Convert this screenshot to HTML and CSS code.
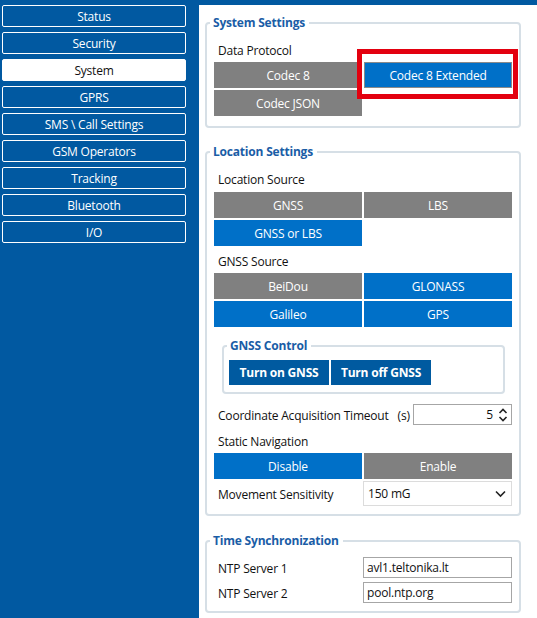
FILE: index.html
```html
<!DOCTYPE html>
<html>
<head>
<meta charset="utf-8">
<link rel="stylesheet" href="styles.css">
</head>
<body>
<div class="app">
  <nav class="nav">
    <div class="nav-btn">Status</div>
    <div class="nav-btn">Security</div>
    <div class="nav-btn active">System</div>
    <div class="nav-btn">GPRS</div>
    <div class="nav-btn">SMS \ Call Settings</div>
    <div class="nav-btn">GSM Operators</div>
    <div class="nav-btn">Tracking</div>
    <div class="nav-btn">Bluetooth</div>
    <div class="nav-btn">I/O</div>
  </nav>
  <main class="main">
    <fieldset class="group g-system">
      <legend>System Settings</legend>
      <div class="label l-proto">Data Protocol</div>
      <div class="opts">
        <div class="opt gray">Codec 8</div>
        <div class="opt blue framed highlight">Codec 8 Extended</div>
        <div class="opt gray">Codec JSON</div>
      </div>
    </fieldset>

    <fieldset class="group g-loc">
      <legend>Location Settings</legend>
      <div class="label l-src">Location Source</div>
      <div class="opts">
        <div class="opt gray">GNSS</div>
        <div class="opt gray">LBS</div>
        <div class="opt blue">GNSS or LBS</div>
      </div>
      <div class="label l-gnss">GNSS Source</div>
      <div class="opts">
        <div class="opt gray">BeiDou</div>
        <div class="opt blue">GLONASS</div>
        <div class="opt blue">Galileo</div>
        <div class="opt blue">GPS</div>
      </div>
      <fieldset class="group inner">
        <legend>GNSS Control</legend>
        <div class="ctrl-row">
          <div class="ctrl">Turn on GNSS</div>
          <div class="ctrl">Turn off GNSS</div>
        </div>
      </fieldset>
      <div class="row r-timeout">
        <span class="row-label">Coordinate Acquisition Timeout</span>
        <span class="unit">(s)</span>
        <div class="spin">
          <span class="spin-val">5</span>
          <svg class="spin-arrows" width="10" height="16" viewBox="0 0 10 16">
            <path d="M1.5 6 L5 2.5 L8.5 6" fill="none" stroke="#222" stroke-width="1.6"/>
            <path d="M1.5 10 L5 13.5 L8.5 10" fill="none" stroke="#222" stroke-width="1.6"/>
          </svg>
        </div>
      </div>
      <div class="label l-static">Static Navigation</div>
      <div class="opts">
        <div class="opt blue">Disable</div>
        <div class="opt gray">Enable</div>
      </div>
      <div class="row r-move">
        <span class="row-label">Movement Sensitivity</span>
        <div class="select">
          <span>150 mG</span>
          <svg width="11" height="8" viewBox="0 0 11 8">
            <path d="M1 1.5 L5.5 6 L10 1.5" fill="none" stroke="#222" stroke-width="1.6"/>
          </svg>
        </div>
      </div>
    </fieldset>

    <fieldset class="group g-time">
      <legend>Time Synchronization</legend>
      <div class="row r-ntp">
        <span class="row-label">NTP Server 1</span>
        <div class="text-in">avl1.teltonika.lt</div>
      </div>
      <div class="row r-ntp">
        <span class="row-label">NTP Server 2</span>
        <div class="text-in">pool.ntp.org</div>
      </div>
    </fieldset>
  </main>
</div>
</body>
</html>
```

FILE: styles.css
```css
* { box-sizing: border-box; }
html, body {
  margin: 0;
  padding: 0;
  width: 537px;
  height: 618px;
  overflow: hidden;
  background: #0159a1;
  font-family: "Open Sans", "Noto Sans", sans-serif;
  font-size: 12px;
  color: #111;
}
.app {
  display: flex;
  height: 618px;
}
.nav {
  width: 199px;
  flex: none;
  padding: 5px 0 0 2px;
  display: flex;
  flex-direction: column;
  gap: 5px;
}
.nav-btn {
  width: 184px;
  height: 22px;
  border: 1px solid #ffffff;
  border-radius: 2px;
  color: #fff;
  display: flex;
  align-items: center;
  justify-content: center;
  letter-spacing: -0.2px;
}
.nav-btn.active {
  background: #fff;
  color: #111;
}
.main {
  flex: 1;
  margin-top: 5px;
  background: #fff;
  padding: 10px 16px 0 6px;
}
.group {
  margin: 0;
  border: 2px solid #d6dfe6;
  border-radius: 4px;
  padding: 0 7px 8px 7px;
  min-width: 0;
}
.g-system { padding-bottom: 10px; }
.group legend {
  margin-left: -4px;
  padding: 0 4px 0 3px;
  font-weight: bold;
  color: #1a5da6;
  font-size: 12px;
  line-height: 16px;
  letter-spacing: -0.2px;
}
.g-loc { margin-top: 16px; }
.g-time { margin-top: 17px; }
.label {
  padding-left: 4px;
  height: 16px;
  line-height: 16px;
  letter-spacing: -0.2px;
}
.l-proto { margin-top: 12px; margin-bottom: 3px; }
.l-src { margin-top: 12px; margin-bottom: 4px; }
.l-gnss { margin-top: 8px; margin-bottom: 3px; }
.l-static { margin-top: 8px; margin-bottom: 3px; }
.opts {
  display: grid;
  grid-template-columns: 148px 148px;
  column-gap: 2px;
  row-gap: 2px;
}
.opt {
  height: 26px;
  color: #fff;
  display: flex;
  align-items: center;
  justify-content: center;
  letter-spacing: -0.2px;
}
.opt.gray { background: #808080; }
.opt.blue { background: #0070c8; }
.opt.framed { border: 1px solid #8a8a8a; }
.highlight {
  position: relative;
}
.highlight::after {
  content: "";
  position: absolute;
  left: -8px;
  top: -14px;
  right: -7px;
  bottom: -12px;
  border: 5px solid #e3000f;
}
.inner {
  margin: 11px 7px 0 8px;
  padding: 0 5px 7px 5px;
}
.inner legend {
  margin-left: -2px;
}
.ctrl-row {
  display: flex;
  gap: 2px;
  margin-top: 6px;
}
.ctrl {
  width: 100px;
  height: 25px;
  background: #005aa0;
  color: #fff;
  font-weight: bold;
  display: flex;
  align-items: center;
  justify-content: center;
  letter-spacing: -0.2px;
}
.row {
  display: flex;
  align-items: center;
  padding-left: 4px;
  letter-spacing: -0.2px;
}
.row-label { flex: none; padding-top: 2px; }
.r-timeout { margin-top: 9px; height: 23px; }
.unit { margin-left: 9px; padding-top: 2px; }
.spin {
  margin-left: auto;
  width: 99px;
  height: 21px;
  border: 1px solid #a6a6a6;
  display: flex;
  align-items: center;
  justify-content: flex-end;
  padding-right: 3px;
  gap: 5px;
}
.spin-val { font-size: 12px; }
.spin-arrows { display: block; }
.r-move { margin-top: 2px; height: 25px; }
.select {
  margin-left: auto;
  width: 149px;
  height: 25px;
  border: 1px solid #dcdcdc;
  display: flex;
  align-items: center;
  justify-content: space-between;
  padding: 0 5px 0 4px;
}
.select svg { display: block; }
.r-ntp { height: 21px; margin-top: 4px; }
.g-time .r-ntp:first-of-type { margin-top: 8px; }
.text-in {
  margin-left: auto;
  width: 149px;
  height: 21px;
  border: 1px solid #a6a6a6;
  padding-left: 3px;
  display: flex;
  align-items: center;
}
```
